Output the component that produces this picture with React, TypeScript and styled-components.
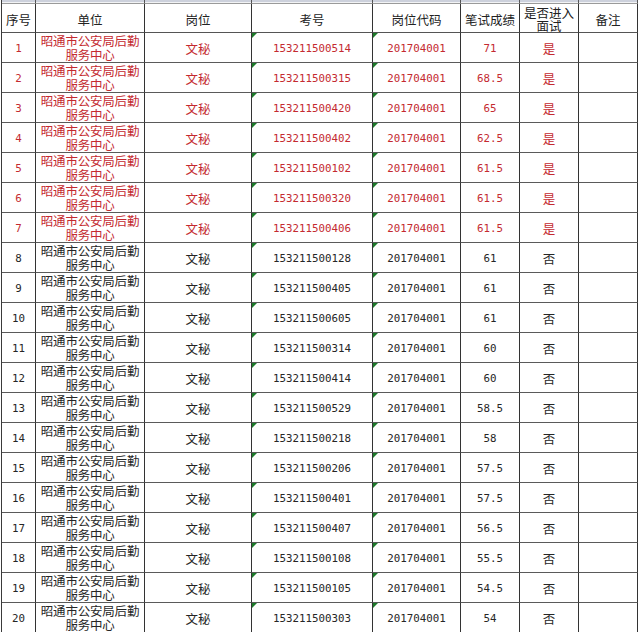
import React from "react";
import styled, { createGlobalStyle } from "styled-components";

const Global = createGlobalStyle`
  html, body { margin: 0; padding: 0; background: #ffffff; }
  body { overflow: hidden; }
`;

const COLS = "34px 109px 107px 121px 88px 59px 59px 59px";

const Sheet = styled.div`
  margin-left: 1px;
  width: 637px;
  display: grid;
  grid-template-columns: ${COLS};
  border-left: 1px solid #3a3a3a;
  height: 632px;
  overflow: hidden;
  align-content: start;
  font-family: "Noto Sans CJK SC", "Noto Sans", sans-serif;
`;

const StripCell = styled.div`
  box-sizing: border-box;
  height: 4px;
  border-right: 1px solid #555;
  border-bottom: 1px solid #9a9a9a;
  background: linear-gradient(#cdd1dc 0 2px, #f2f3f5 2px);
`;

const HeadCell = styled.div<{ $two?: boolean }>`
  box-sizing: border-box;
  height: 29px;
  border-right: 1px solid #333;
  border-bottom: 1px solid #555;
  display: flex;
  align-items: center;
  justify-content: center;
  text-align: center;
  padding-top: ${(p) => (p.$two ? "1px" : "3px")};
  font-size: 12.5px;
  line-height: ${(p) => (p.$two ? "13px" : "14px")};
  color: #222;
  overflow: hidden;
`;

const Cell = styled.div<{ $red?: boolean; $mono?: boolean }>`
  position: relative;
  box-sizing: border-box;
  height: 30px;
  border-right: 1px solid #333;
  border-bottom: 1px solid #5a5a5a;
  display: flex;
  align-items: center;
  justify-content: center;
  text-align: center;
  color: ${(p) => (p.$red ? "#c42a30" : "#262626")};
  font-family: ${(p) =>
    p.$mono
      ? '"DejaVu Sans Mono", "Liberation Mono", monospace'
      : '"Noto Sans CJK SC", "Noto Sans", sans-serif'};
  font-size: ${(p) => (p.$mono ? "10.8px" : "12.5px")};
  padding-top: 1px;
  overflow: hidden;
  white-space: nowrap;
`;

const UnitCell = styled(Cell)`
  white-space: normal;
  line-height: 13.5px;
  padding-top: 0;
  letter-spacing: -0.2px;
`;

const Tri = styled.span`
  position: absolute;
  left: 0;
  top: 0;
  width: 0;
  height: 0;
  border-top: 5px solid #1d7a2a;
  border-right: 5px solid transparent;
`;

const heads: { t: React.ReactNode; two?: boolean }[] = [
  { t: "序号" },
  { t: "单位" },
  { t: "岗位" },
  { t: "考号" },
  { t: "岗位代码" },
  { t: "笔试成绩" },
  { t: (<>是否进入<br />面试</>), two: true },
  { t: "备注" },
];

const data: [string, string][] = [
  ["153211500514", "71"],
  ["153211500315", "68.5"],
  ["153211500420", "65"],
  ["153211500402", "62.5"],
  ["153211500102", "61.5"],
  ["153211500320", "61.5"],
  ["153211500406", "61.5"],
  ["153211500128", "61"],
  ["153211500405", "61"],
  ["153211500605", "61"],
  ["153211500314", "60"],
  ["153211500414", "60"],
  ["153211500529", "58.5"],
  ["153211500218", "58"],
  ["153211500206", "57.5"],
  ["153211500401", "57.5"],
  ["153211500407", "56.5"],
  ["153211500108", "55.5"],
  ["153211500105", "54.5"],
  ["153211500303", "54"],
];

export default function App() {
  return (
    <>
      <Global />
      <Sheet>
        {heads.map((_, i) => (
          <StripCell key={"s" + i} />
        ))}
        {heads.map((h, i) => (
          <HeadCell key={"h" + i} $two={h.two}>
            {h.t}
          </HeadCell>
        ))}
        {data.map(([id, score], i) => {
          const red = i < 7;
          return (
            <React.Fragment key={id}>
              <Cell $red={red} $mono>{i + 1}</Cell>
              <UnitCell $red={red}>昭通市公安局后勤<br />服务中心</UnitCell>
              <Cell $red={red}>文秘</Cell>
              <Cell $red={red} $mono>
                <Tri />
                {id}
              </Cell>
              <Cell $red={red} $mono>
                <Tri />
                201704001
              </Cell>
              <Cell $red={red} $mono>{score}</Cell>
              <Cell $red={red}>{red ? "是" : "否"}</Cell>
              <Cell $red={red} />
            </React.Fragment>
          );
        })}
      </Sheet>
    </>
  );
}
